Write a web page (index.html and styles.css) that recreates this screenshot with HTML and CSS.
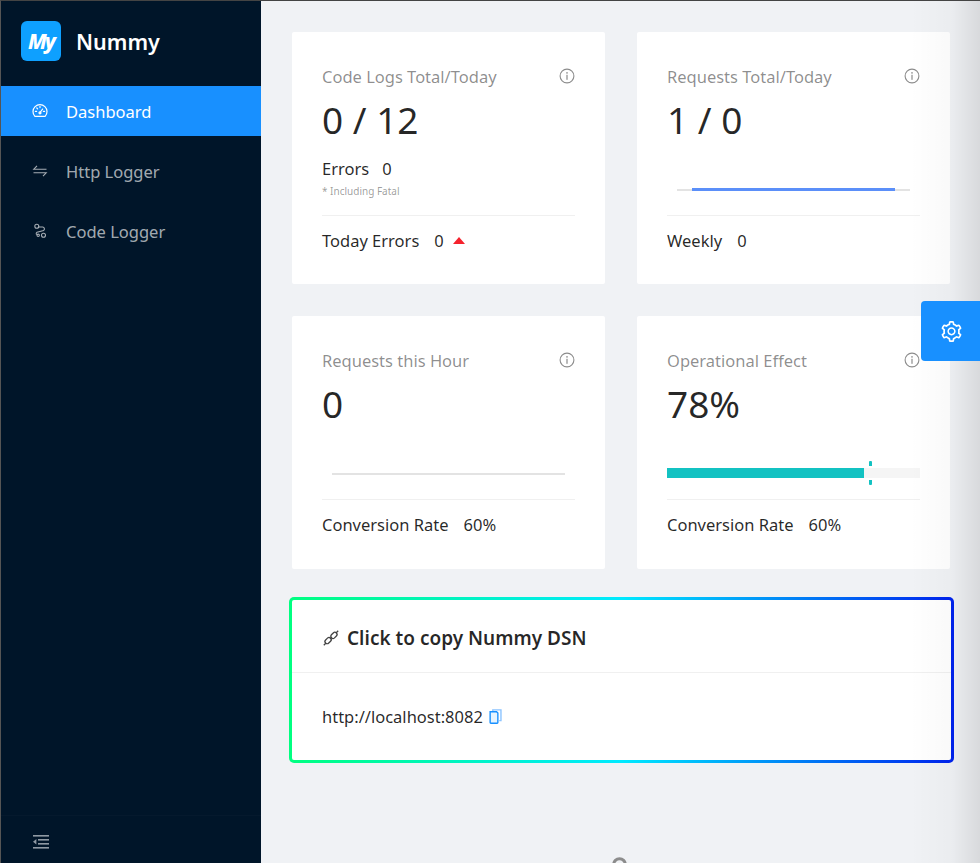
FILE: index.html
```html
<!DOCTYPE html>
<html lang="en">
<head>
    <meta charset="UTF-8">
    <meta name="viewport" content="width=device-width, initial-scale=1.0">
    <title>Nummy</title>
    <link rel="stylesheet" href="styles.css">
</head>
<body>
    <aside class="sidebar">
        <div class="brand">
            <span class="brand-logo">My</span>
            <span class="brand-name">Nummy</span>
        </div>
        <nav class="menu">
            <a class="menu-item active">
                <svg class="menu-icon" viewBox="0 0 16 16" fill="none" stroke="currentColor" stroke-width="1.2"><path d="M2.9 13.4h10.2a7 7 0 1 0-10.2 0z"/><path d="M8 9.5l2.6-3.4M3.4 8.4h1.2M11.4 8.4h1.2M8 3.4v1.2M4.8 5l.8.8" stroke-linecap="round"/><circle cx="8" cy="9.8" r="1"/></svg>
                Dashboard
            </a>
            <a class="menu-item">
                <svg class="menu-icon" viewBox="0 0 16 16" fill="none" stroke="currentColor" stroke-width="1.1"><path d="M5 2.8L1.8 6.2h12.7M11 13.2l3.2-3.4H1.5"/></svg>
                Http Logger
            </a>
            <a class="menu-item">
                <svg class="menu-icon" viewBox="0 0 16 16" fill="none" stroke="currentColor" stroke-width="1.1"><circle cx="4.8" cy="3.2" r="2"/><circle cx="11.5" cy="12.3" r="2"/><circle cx="6.2" cy="12.3" r="1.2"/><path d="M6.6 4h4a2 2 0 0 1 1 3.6L5 9.2a1.5 1.5 0 0 0-.3 2.4"/></svg>
                Code Logger
            </a>
        </nav>
        <div class="trigger">
            <svg width="16" height="14" viewBox="0 0 16 14" fill="currentColor"><rect width="16" height="1.6"/><rect x="5" y="4" width="11" height="1.6"/><rect x="5" y="8" width="11" height="1.6"/><rect y="12" width="16" height="1.6"/><path d="M0 6.8L3.4 4v5.6z"/></svg>
        </div>
    </aside>

    <main class="content">
        <section class="stats">
            <div class="card">
                <div class="card-title">Code Logs Total/Today <svg class="info" viewBox="0 0 16 16"><use href="#info-icon"/></svg></div>
                <div class="card-value">0 / 12</div>
                <div class="card-body">
                    <div class="errors"><span>Errors</span><span>0</span></div>
                    <div class="hint">* Including Fatal</div>
                </div>
                <div class="card-foot"><span>Today Errors</span><span>0</span><i class="caret-up"></i></div>
            </div>
            <div class="card">
                <div class="card-title">Requests Total/Today <svg class="info" viewBox="0 0 16 16"><use href="#info-icon"/></svg></div>
                <div class="card-value">1 / 0</div>
                <div class="card-body chart-body">
                    <div class="mini-line"><div class="mini-line-fill"></div></div>
                </div>
                <div class="card-foot"><span>Weekly</span><span>0</span></div>
            </div>
            <div class="card">
                <div class="card-title">Requests this Hour <svg class="info" viewBox="0 0 16 16"><use href="#info-icon"/></svg></div>
                <div class="card-value">0</div>
                <div class="card-body chart-body">
                    <div class="mini-line"></div>
                </div>
                <div class="card-foot"><span>Conversion Rate</span><span>60%</span></div>
            </div>
            <div class="card">
                <div class="card-title">Operational Effect <svg class="info" viewBox="0 0 16 16"><use href="#info-icon"/></svg></div>
                <div class="card-value">78%</div>
                <div class="card-body chart-body">
                    <div class="progress">
                        <div class="progress-fill" style="width: 78%"></div>
                        <div class="progress-target" style="left: 80%"></div>
                    </div>
                </div>
                <div class="card-foot"><span>Conversion Rate</span><span>60%</span></div>
            </div>
        </section>

        <section class="dsn">
            <div class="dsn-inner">
                <div class="dsn-head">
                    <svg class="link-icon" viewBox="0 0 16 16" fill="none" stroke="currentColor" stroke-width="1.3"><path d="M.8 15.2l2.2-2.2M15.2.8L13 3M7 9l2-2"/><rect x="1.6" y="8.4" width="7" height="4.4" rx="2.2" transform="rotate(-45 5.1 10.6)"/><rect x="7.4" y="3.2" width="7" height="4.4" rx="2.2" transform="rotate(-45 10.9 5.4)"/></svg>
                    Click to copy Nummy DSN
                </div>
                <div class="dsn-body">
                    http://localhost:8082
                    <svg class="copy-icon" viewBox="0 0 12 14" fill="none" stroke="#1890ff" stroke-width="1.3"><path d="M3.5 2.5V.8h7.6v10h-1.6" stroke="#8cc4ff"/><path d="M1 2.6h6l1.2 1.2v8.8a.7.7 0 0 1-.7.7H1.7a.7.7 0 0 1-.7-.7z" fill="#e6f4ff"/></svg>
                </div>
            </div>
        </section>

        <footer class="page-foot">
            <svg width="15" height="15" viewBox="0 0 15 15" fill="none" stroke="#8c8c8c" stroke-width="3"><circle cx="7.5" cy="7.5" r="5.8"/></svg>
        </footer>
    </main>

    <div class="edge-shade"></div>
    <button class="settings-btn" aria-label="Settings">
        <svg width="21" height="21" viewBox="64 64 896 896" fill="#fff"><path d="M924.8 625.7l-65.5-56c3.1-19 4.7-38.4 4.7-57.8s-1.6-38.8-4.7-57.8l65.5-56a32.03 32.03 0 0 0 9.3-35.2l-.9-2.6a443.74 443.74 0 0 0-79.7-137.9l-1.8-2.1a32.12 32.12 0 0 0-35.1-9.5l-81.3 28.9c-30-24.6-63.5-44-99.7-57.6l-15.7-85a32.05 32.05 0 0 0-25.8-25.7l-2.7-.5c-52.1-9.4-106.9-9.4-159 0l-2.7.5a32.05 32.05 0 0 0-25.8 25.7l-15.8 85.4a351.86 351.86 0 0 0-99 57.4l-81.9-29.1a32 32 0 0 0-35.1 9.5l-1.8 2.1a446.02 446.02 0 0 0-79.7 137.9l-.9 2.6c-4.5 12.5-.8 26.5 9.3 35.2l66.3 56.6c-3.1 18.8-4.6 38-4.6 57.1 0 19.2 1.5 38.4 4.6 57.1L99 625.5a32.03 32.03 0 0 0-9.3 35.2l.9 2.6c18.1 50.4 44.9 96.9 79.7 137.9l1.8 2.1a32.12 32.12 0 0 0 35.1 9.5l81.9-29.1c29.8 24.5 63.1 43.9 99 57.4l15.8 85.4a32.05 32.05 0 0 0 25.8 25.7l2.7.5a449.4 449.4 0 0 0 159 0l2.7-.5a32.05 32.05 0 0 0 25.8-25.7l15.7-85a350 350 0 0 0 99.7-57.6l81.3 28.9a32 32 0 0 0 35.1-9.5l1.8-2.1c34.8-41.1 61.6-87.5 79.7-137.9l.9-2.6c4.5-12.3.8-26.3-9.3-35zM788.3 465.9c2.5 15.1 3.8 30.6 3.8 46.1s-1.3 31-3.8 46.1l-6.6 40.1 74.7 63.9a370.03 370.03 0 0 1-42.6 73.6L721 702.8l-31.4 25.8c-23.9 19.6-50.5 35-79.3 45.8l-38.1 14.3-17.9 97a377.5 377.5 0 0 1-85 0l-17.9-97.2-37.8-14.5c-28.5-10.8-55-26.2-78.7-45.7l-31.4-25.9-93.4 33.2c-17-22.9-31.2-47.6-42.6-73.6l75.5-64.5-6.5-40c-2.4-14.9-3.7-30.3-3.7-45.5 0-15.3 1.2-30.6 3.7-45.5l6.5-40-75.5-64.5c11.3-26.1 25.6-50.7 42.6-73.6l93.4 33.2 31.4-25.9c23.7-19.5 50.2-34.9 78.7-45.7l37.9-14.3 17.9-97.2c28.1-3.2 56.8-3.2 85 0l17.9 97 38.1 14.3c28.7 10.8 55.4 26.2 79.3 45.8l31.4 25.8 92.8-32.9c17 22.9 31.2 47.6 42.6 73.6L781.8 426l6.5 39.9zM512 326c-97.2 0-176 78.8-176 176s78.8 176 176 176 176-78.8 176-176-78.8-176-176-176zm79.2 255.2A111.6 111.6 0 0 1 512 614c-29.9 0-58-11.7-79.2-32.8A111.6 111.6 0 0 1 400 502c0-29.9 11.7-58 32.8-79.2C454 401.6 482.1 390 512 390c29.9 0 58 11.6 79.2 32.8A111.6 111.6 0 0 1 624 502c0 29.9-11.7 58-32.8 79.2z"/></svg>
    </button>

    <svg class="icon-defs" width="0" height="0">
        <symbol id="info-icon" viewBox="0 0 16 16">
            <circle cx="8" cy="8" r="6.9" fill="none" stroke="#8c8c8c" stroke-width="1.1"/>
            <rect x="7.4" y="6.8" width="1.2" height="5" fill="#8c8c8c"/>
            <circle cx="8" cy="4.9" r=".8" fill="#8c8c8c"/>
        </symbol>
    </svg>
</body>
</html>
```

FILE: styles.css
```css
* {
    box-sizing: border-box;
}
html, body {
    height: 100%;
}
body {
    margin: 0;
    display: flex;
    height: 863px;
    overflow: hidden;
    position: relative;
    background: #f0f2f5;
    border-top: 1px solid #444;
    border-left: 1px solid #555;
    font-family: "Noto Sans", "Open Sans", Arial, sans-serif;
    font-size: 16.5px;
    color: rgba(0, 0, 0, 0.85);
}

/* sidebar */
.sidebar {
    width: 260px;
    flex-shrink: 0;
    background: #001529;
    display: flex;
    flex-direction: column;
}
.brand {
    display: flex;
    align-items: center;
    gap: 15px;
    height: 85px;
    padding: 0 0 5px 20px;
}
.brand-logo {
    width: 40px;
    height: 40px;
    border-radius: 6px;
    background: #0ea0ff;
    color: #fff;
    font-size: 21px;
    font-weight: 800;
    font-style: italic;
    letter-spacing: -2px;
    text-align: center;
    line-height: 40px;
}
.brand-name {
    color: #fff;
    font-size: 21.5px;
    font-weight: 600;
}
.menu {
    display: flex;
    flex-direction: column;
    gap: 10px;
    flex: 1;
}
.menu-item {
    display: flex;
    align-items: center;
    gap: 18px;
    height: 50px;
    padding-left: 31px;
    color: rgba(255, 255, 255, 0.65);
    font-size: 16.5px;
}
.menu-item.active {
    background: #1890ff;
    color: #fff;
}
.menu-icon {
    width: 16px;
    height: 16px;
}
.trigger {
    height: 48px;
    padding: 15px 0 0 32px;
    border-top: 1px solid #05192d;
    color: #8f99a3;
}

/* main area */
.content {
    flex: 1;
    min-width: 0;
    padding: 31px 30px 0 31px;
}
.stats {
    display: grid;
    grid-template-columns: 313px 313px;
    grid-template-rows: 252px 253px;
    gap: 32px;
}
.card {
    background: #fff;
    border-radius: 2px;
    padding: 33px 30px 0;
    display: flex;
    flex-direction: column;
}
.card-title {
    display: flex;
    justify-content: space-between;
    align-items: center;
    height: 24px;
    padding-bottom: 2px;
    color: rgba(0, 0, 0, 0.45);
    font-size: 16.5px;
}
.info {
    width: 16px;
    height: 16px;
    margin-right: 0.5px;
}
.card-value {
    font-size: 37px;
    line-height: 46px;
    margin-top: 8px;
}
.card-body {
    height: 71px;
    padding-top: 2px;
}
.errors, .card-foot {
    display: flex;
    align-items: center;
    gap: 15px;
}
.errors {
    gap: 13px;
    margin-top: 12px;
}
.hint {
    font-size: 10px;
    color: rgba(0, 0, 0, 0.4);
    margin-top: 4px;
}
.card-foot {
    border-top: 1px solid #f0f0f0;
    height: 50px;
    margin-top: 1px;
}
.caret-up {
    width: 0;
    height: 0;
    margin-left: -6px;
    border: 6.5px solid transparent;
    border-top: 0;
    border-bottom: 7px solid #f5222d;
}
.chart-body {
    position: relative;
}
.mini-line {
    position: absolute;
    left: 10px;
    right: 10px;
    top: 46px;
    height: 2px;
    background: #e3e3e3;
}
.mini-line-fill {
    position: relative;
    top: -1px;
    height: 3px;
    margin: 0 15px;
    background: #5b8ff9;
}
.progress {
    position: absolute;
    left: 0;
    right: 0;
    top: 41px;
    height: 10px;
    background: #f5f5f5;
}
.progress-fill {
    height: 100%;
    background: #13c2c2;
}
.progress-target {
    position: absolute;
    top: -7px;
    width: 3px;
    height: 24px;
    background: linear-gradient(#13c2c2 0 5px, transparent 5px 19px, #13c2c2 19px);
    border-radius: 1px;
}

/* dsn card */
.dsn {
    margin: 28px -4px 0 -3px;
    padding: 3px;
    border-radius: 5px;
    background: linear-gradient(to right, #00ff80, #00eaff 50%, #0022ee);
}
.dsn-inner {
    background: #fff;
    border-radius: 2px;
}
.dsn-head {
    display: flex;
    align-items: center;
    gap: 8px;
    height: 73px;
    padding: 3px 0 0 31px;
    border-bottom: 1px solid #f0f0f0;
    font-size: 19px;
    font-weight: 600;
}
.link-icon {
    width: 16px;
    height: 16px;
    color: #444;
}
.dsn-body {
    display: flex;
    align-items: center;
    gap: 6px;
    height: 87px;
    padding: 0 0 0 30px;
}
.copy-icon {
    width: 13px;
    height: 15px;
}
.page-foot {
    display: flex;
    justify-content: center;
    margin-top: 94px;
    padding-right: 3px;
}

/* overlays on the right edge */
.edge-shade {
    position: absolute;
    top: 0;
    right: 0;
    bottom: 0;
    width: 70px;
    background: linear-gradient(to right, rgba(0, 0, 0, 0), rgba(0, 0, 0, 0.025) 60%, rgba(0, 0, 0, 0.1));
    pointer-events: none;
}
.settings-btn {
    position: absolute;
    top: 300px;
    right: 0;
    width: 59px;
    height: 60px;
    border: none;
    border-radius: 4px 0 0 4px;
    background: #1890ff;
    display: flex;
    align-items: center;
    justify-content: center;
    padding: 0 0 0 2px;
    cursor: pointer;
}
.icon-defs {
    position: absolute;
}
```
